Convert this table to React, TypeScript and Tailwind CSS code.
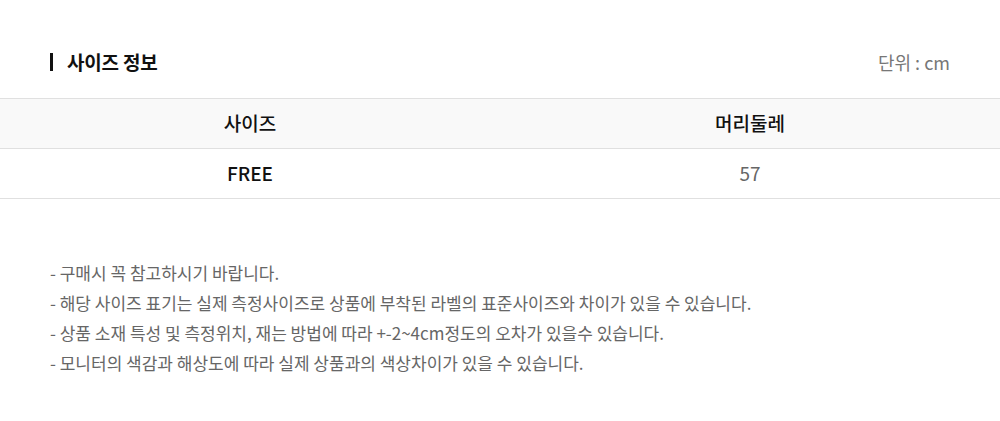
const notes = [
  "- 구매시 꼭 참고하시기 바랍니다.",
  "- 해당 사이즈 표기는 실제 측정사이즈로 상품에 부착된 라벨의 표준사이즈와 차이가 있을 수 있습니다.",
  "- 상품 소재 특성 및 측정위치, 재는 방법에 따라 +-2~4cm정도의 오차가 있을수 있습니다.",
  "- 모니터의 색감과 해상도에 따라 실제 상품과의 색상차이가 있을 수 있습니다.",
];

export default function App() {
  return (
    <div
      className="w-[1000px] h-[421px] bg-white pt-[48px]"
      style={{ fontFamily: '"Noto Sans CJK KR", "Noto Sans", sans-serif' }}
    >
      {/* Title */}
      <div className="flex items-center justify-between px-[50px] h-[28px]">
        <div className="flex items-center">
          <div className="w-[3px] h-[18px] bg-[#111]" />
          <h2 className="ml-[14px] text-[19px] font-bold text-[#111] tracking-[-0.01em]">사이즈 정보</h2>
        </div>
        <span className="text-[18px] text-[#777]">단위 : cm</span>
      </div>

      {/* Table */}
      <div className="mt-[22px] border-t border-[#e0e0e0]">
        <div className="grid grid-cols-2 h-[50px] bg-[#f9f9f9] border-b border-[#e0e0e0] items-center text-center text-[19px] font-medium text-[#111]">
          <div>사이즈</div>
          <div>머리둘레</div>
        </div>
        <div className="grid grid-cols-2 h-[50px] border-b border-[#e0e0e0] items-center text-center text-[19px]">
          <div className="font-medium text-[#111]">FREE</div>
          <div className="text-[#666]">57</div>
        </div>
      </div>

      {/* Notes */}
      <ul className="mt-[59px] px-[50px] text-[17px] leading-[30px] text-[#666]">
        {notes.map((n) => (
          <li key={n}>{n}</li>
        ))}
      </ul>
    </div>
  );
}
